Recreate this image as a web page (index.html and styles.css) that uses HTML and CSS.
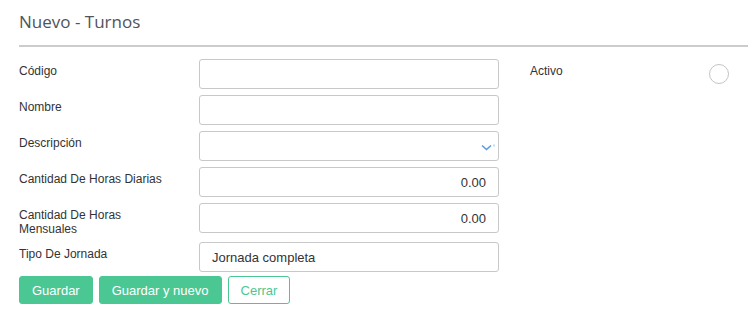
FILE: index.html
```html
<!doctype html>
<html lang="es">
<head>
    <meta charset="UTF-8">
    <title>Nuevo - Turnos</title>
    <link rel="stylesheet" href="styles.css">
</head>
<body>
    <div class="page-head">
        <h1>Nuevo - Turnos</h1>
    </div>
    <div class="form-wrap">
        <div class="form-main">
            <div class="row">
                <label class="lbl">Código</label>
                <input class="field" type="text">
            </div>
            <div class="row">
                <label class="lbl">Nombre</label>
                <input class="field" type="text">
            </div>
            <div class="row">
                <label class="lbl">Descripción</label>
                <div class="select-box">
                    <input class="field" type="text">
                    <svg class="chev" width="16" height="8" viewBox="0 0 16 8">
                        <polyline points="1,1.5 5.5,5.5 10,1.5" fill="none" stroke="#5b9be6" stroke-width="1.6"/>
                        <line x1="13" y1="0.5" x2="13" y2="2.5" stroke="#8cb8ee" stroke-width="1"/>
                    </svg>
                </div>
            </div>
            <div class="row">
                <label class="lbl">Cantidad De Horas Diarias</label>
                <input class="field num" type="text" value="0.00">
            </div>
            <div class="row">
                <label class="lbl">Cantidad De Horas Mensuales</label>
                <input class="field num" type="text" value="0.00">
            </div>
            <div class="row row-last">
                <label class="lbl">Tipo De Jornada</label>
                <input class="field" type="text" value="Jornada completa">
            </div>
            <div class="actions">
                <button class="btn btn-fill">Guardar</button>
                <button class="btn btn-fill">Guardar y nuevo</button>
                <button class="btn btn-line">Cerrar</button>
            </div>
        </div>
        <div class="form-side">
            <label class="lbl">Activo</label>
            <span class="radio"></span>
        </div>
    </div>
</body>
</html>
```
FILE: styles.css
```css
body{
    margin: 0;
    font-family: "Liberation Sans", Arial, sans-serif;
    color: #333;
}
.page-head{
    margin-left: 19px;
    border-bottom: 2px solid #cccccd;
    height: 47px;
    box-sizing: border-box;
}
.page-head h1{
    margin: 0;
    padding-top: 11px;
    font-family: "Open Sans", sans-serif;
    font-weight: normal;
    font-size: 17px;
    line-height: 22px;
    color: #50545c;
}
.form-wrap{
    display: flex;
    padding: 12px 20px 0 19px;
    gap: 31px;
}
.form-main{
    width: 480px;
    flex-shrink: 0;
}
.row{
    display: flex;
    margin-bottom: 6px;
}
.row-last{
    margin-bottom: 4px;
}
.lbl{
    width: 152px;
    margin-right: 28px;
    padding-top: 5px;
    font-size: 12px;
    line-height: 14px;
    color: #333;
}
.field{
    width: 300px;
    height: 30px;
    flex-shrink: 0;
    box-sizing: border-box;
    border: 1px solid #c8c8c8;
    border-radius: 3px;
    padding: 0 12px;
    font-family: "Liberation Sans", Arial, sans-serif;
    font-size: 13px;
    color: #333;
    outline: none;
}
.num{
    text-align: right;
}
.select-box{
    position: relative;
    width: 300px;
    height: 30px;
    flex-shrink: 0;
}
.chev{
    position: absolute;
    left: 282px;
    top: 13px;
}
.actions{
    display: flex;
    gap: 6px;
}
.btn{
    height: 28px;
    box-sizing: border-box;
    border-radius: 3px;
    padding: 0 12px;
    font-family: "Liberation Sans", Arial, sans-serif;
    font-size: 13px;
    cursor: pointer;
}
.btn-fill{
    background-color: #4bc793;
    border: 1px solid #4bc793;
    color: #fff;
}
.btn-line{
    background-color: #fff;
    border: 1px solid #4bc793;
    color: #4bc793;
}
.form-side{
    flex: 1;
    display: flex;
    justify-content: space-between;
}
.form-side .lbl{
    width: auto;
    margin-right: 0;
}
.radio{
    width: 18px;
    height: 18px;
    margin-top: 5px;
    margin-right: -1px;
    border: 1px solid #c4c4c4;
    border-radius: 50%;
}
```
